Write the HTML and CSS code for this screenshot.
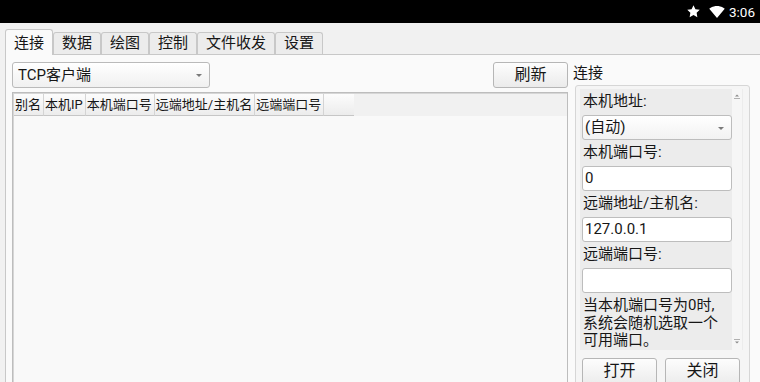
FILE: index.html
```html
<!DOCTYPE html>
<html lang="zh">
<head>
<meta charset="utf-8">
<title>连接</title>
<link rel="stylesheet" href="styles.css">
</head>
<body>
<div class="statusbar">
  <svg class="star" width="15" height="15" viewBox="0 0 24 24"><path fill="#fff" d="M12 2l3.09 6.26L22 9.27l-5 4.87 1.18 6.88L12 17.77l-6.18 3.25L7 14.14 2 9.27l6.91-1.01L12 2z"/></svg>
  <svg class="wifi" width="16" height="16" viewBox="0 0 24 24"><path fill="#fff" d="M12 21L23.6 7C23.15 6.66 18.67 3 12 3S.85 6.66.4 7L12 21z"/></svg>
  <span class="time">3:06</span>
</div>
<div class="main">
  <div class="tabs">
    <div class="tab active">连接</div>
    <div class="tab">数据</div>
    <div class="tab">绘图</div>
    <div class="tab">控制</div>
    <div class="tab">文件收发</div>
    <div class="tab">设置</div>
  </div>
  <div class="pane">
    <div class="left">
      <div class="toolbar">
        <div class="combo">TCP客户端<span class="arrow"></span></div>
        <div class="btn refresh">刷新</div>
      </div>
      <div class="table">
        <div class="thead">
          <div class="th">别名</div>
          <div class="th">本机IP</div>
          <div class="th">本机端口号</div>
          <div class="th">远端地址/主机名</div>
          <div class="th">远端端口号</div>
          <div class="th th-empty"></div>
        </div>
      </div>
    </div>
    <div class="right">
      <div class="gtitle">连接</div>
      <div class="group">
        <div class="scroll">
          <div class="scontent">
            <div class="lbl">本机地址:</div>
            <div class="field combo-field">(自动)<span class="arrow"></span></div>
            <div class="lbl">本机端口号:</div>
            <div class="field">0</div>
            <div class="lbl">远端地址/主机名:</div>
            <div class="field">127.0.0.1</div>
            <div class="lbl">远端端口号:</div>
            <div class="field"></div>
            <div class="note">当本机端口号为0时,<br>系统会随机选取一个<br>可用端口。</div>
          </div>
          <div class="sbar">
            <svg width="10" height="8" viewBox="0 0 10 8"><path d="M3 4.5L5 2.5L7 4.5Z" fill="#8a8a8a"/><rect x="2" y="6" width="6" height="1" fill="#b0b0b0"/></svg>
            <svg width="10" height="8" viewBox="0 0 10 8"><rect x="2" y="1" width="6" height="1" fill="#b0b0b0"/><path d="M3 3.5L5 5.5L7 3.5Z" fill="#8a8a8a"/></svg>
          </div>
        </div>
        <div class="btns">
          <div class="btn">打开</div>
          <div class="btn">关闭</div>
        </div>
      </div>
    </div>
  </div>
</div>
</body>
</html>
```
FILE: styles.css
```css
* { box-sizing: border-box; }
body {
  margin: 0;
  width: 760px;
  height: 382px;
  overflow: hidden;
  background: #f1f1f1;
  font-family: Roboto, "Noto Sans CJK SC", sans-serif;
  color: #161616;
}
.statusbar {
  height: 23px;
  background: #000;
  display: flex;
  justify-content: flex-end;
  align-items: center;
  padding-right: 5px;
  color: #fff;
  font-size: 13.5px;
}
.star { margin-right: 8px; }
.wifi { margin-right: 4px; margin-top: 1px; }
.time { line-height: 16px; }
.main { padding: 6px 0 0 5px; }
.tabs {
  display: flex;
  align-items: flex-end;
  height: 26px;
  margin-bottom: -1px;
  position: relative;
  z-index: 1;
}
.tab {
  font-size: 15px;
  line-height: 20px;
  height: 22px;
  padding: 0 8px;
  border: 1px solid #c8c8c8;
  border-bottom: none;
  border-radius: 3px 3px 0 0;
  background: #ececec;
  margin-bottom: 1px;
}
.tab.active {
  height: 26px;
  padding-top: 3px;
  background: #fafafa;
  margin: 0;
}
.pane {
  width: 790px;
  height: 340px;
  border: 1px solid #c8c8c8;
  background: #fafafa;
  display: flex;
  gap: 5px;
  padding: 7px 0 0 6px;
}
.left {
  width: 556px;
  display: flex;
  flex-direction: column;
}
.toolbar { display: flex; height: 26px; }
.combo {
  width: 198px;
  height: 26px;
  border: 1px solid #bababa;
  border-radius: 3px;
  background: linear-gradient(#ffffff, #f0f0f0);
  font-size: 15px;
  line-height: 24px;
  padding-left: 5px;
  position: relative;
}
.arrow {
  position: absolute;
  right: 7px;
  top: 11px;
  width: 0;
  height: 0;
  border-left: 3px solid transparent;
  border-right: 3px solid transparent;
  border-top: 3px solid #7a7a7a;
}
.btn {
  height: 26px;
  border: 1px solid #b6b6b6;
  border-radius: 3px;
  background: linear-gradient(#fdfdfd, #ebebeb);
  font-size: 16px;
  line-height: 24px;
  text-align: center;
}
.refresh { width: 75px; margin-left: auto; }
.table {
  margin-top: 4px;
  flex: 1;
  border: 1px solid #bdbdbd;
  box-shadow: inset 1px 1px 0 #d6d6d6;
  background: #f9f9f9;
  padding: 1px 0 0 1px;
}
.thead {
  display: flex;
  height: 22px;
  background: #f1f1f1;
}
.th {
  font-size: 13px;
  line-height: 21px;
  padding: 0 2px 0 1px;
  background: linear-gradient(#fcfcfc, #ececec);
  border-right: 1px solid #d4d4d4;
  border-bottom: 1px solid #c6c6c6;
  white-space: nowrap;
}
.th-empty { width: 30px; border-right: none; }
.right {
  width: 177px;
  display: flex;
  flex-direction: column;
}
.gtitle {
  font-size: 15px;
  height: 23px;
  line-height: 22px;
}
.group {
  margin-left: 2px;
  flex: 1;
  border: 1px solid #d6d6d6;
  border-radius: 3px;
  background: #f5f5f5;
  padding: 3px 6px 0 4px;
}
.scroll {
  display: flex;
  height: 261px;
  background: #ececec;
}
.scontent { width: 152px; padding-left: 2px; }
.lbl {
  height: 26px;
  font-size: 15px;
  line-height: 24px;
  padding-left: 1px;
  white-space: nowrap;
}
.field {
  width: 150px;
  height: 25px;
  border: 1px solid #bdbdbd;
  border-radius: 3px;
  background: #fff;
  font-size: 15px;
  line-height: 23px;
  padding-left: 2px;
  position: relative;
}
.combo-field { background: linear-gradient(#ffffff, #f2f2f2); }
.note {
  font-size: 15px;
  line-height: 17.5px;
  padding-top: 4px;
  padding-left: 1px;
  white-space: nowrap;
}
.sbar {
  width: 10px;
  background: #f6f6f6;
  display: flex;
  flex-direction: column;
  justify-content: space-between;
  padding: 3px 0 4px;
}
.btns {
  display: flex;
  gap: 8px;
  padding-left: 2px;
  margin-top: 8px;
}
.btns .btn { width: 75px; height: 28px; }
```
